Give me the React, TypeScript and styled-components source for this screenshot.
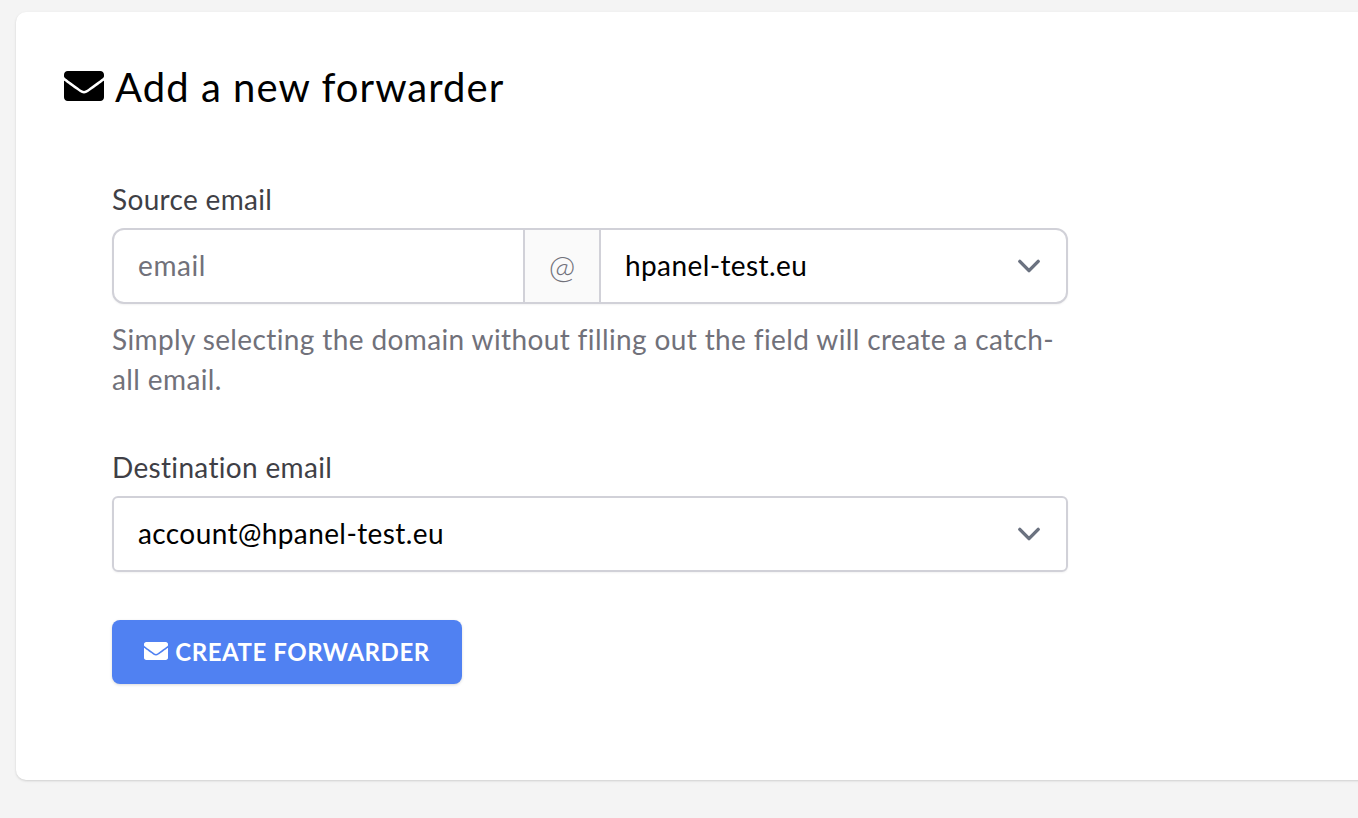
import React from "react";
import styled, { createGlobalStyle } from "styled-components";
import { FaEnvelope } from "react-icons/fa";

const Global = createGlobalStyle`
  html, body { margin: 0; padding: 0; height: 100%; overflow: hidden; background: #f4f4f4; }
  body { font-family: "Lato", "Noto Sans", sans-serif; }
`;

const Page = styled.main`
  height: 818px;
  overflow: hidden;
  padding: 12px 0 0 16px;
  box-sizing: border-box;
`;

const Card = styled.section`
  box-sizing: border-box;
  width: 1400px;
  height: 768px;
  padding: 47px 48px;
  background: #fff;
  border-radius: 10px;
  box-shadow: 0 1px 3px rgba(0, 0, 0, 0.1), 0 1px 2px rgba(0, 0, 0, 0.06);
`;

const Title = styled.h1`
  display: flex;
  align-items: center;
  gap: 11px;
  margin: 0 0 64px;
  height: 56px;
  font-size: 40px;
  line-height: 56px;
  font-weight: 400;
  letter-spacing: 1.05px;
  color: #000;
  svg { width: 40px; height: 40px; flex: none; margin-top: -2px; }
`;

const Form = styled.form`
  width: 956px;
  margin-left: 48px;
`;

const Field = styled.div<{ $gap: number }>`
  margin-bottom: ${(p) => p.$gap}px;
`;

const Label = styled.label`
  display: block;
  font-size: 28px;
  line-height: 40px;
  letter-spacing: 0.33px;
  color: #3f3f46;
  margin-bottom: 9px;
`;

const Group = styled.div`
  display: flex;
  height: 76px;
  box-sizing: border-box;
  border: 2px solid #d1d1d8;
  border-radius: 12px;
  background: #fff;
  overflow: hidden;
  box-shadow: 0 1px 2px rgba(0, 0, 0, 0.05);
`;

const TextInput = styled.input`
  width: 409px;
  flex: none;
  box-sizing: border-box;
  border: 0;
  outline: 0;
  padding: 0 24px 2px;
  font: inherit;
  font-size: 28px;
  letter-spacing: 0.6px;
  color: #000;
  background: transparent;
  &::placeholder { color: #71717a; opacity: 1; }
`;

const Addon = styled.span`
  width: 78px;
  flex: none;
  box-sizing: border-box;
  padding-bottom: 2px;
  display: flex;
  align-items: center;
  justify-content: center;
  border-left: 2px solid #d1d1d8;
  border-right: 2px solid #d1d1d8;
  background: #fafafa;
  color: #71717a;
  font-size: 32px;
  font-weight: 300;
`;

const chevron = `url("data:image/svg+xml,%3csvg xmlns='http://www.w3.org/2000/svg' fill='none' viewBox='0 0 20 20'%3e%3cpath stroke='%236b7280' stroke-linecap='round' stroke-linejoin='round' stroke-width='1.5' d='M6 8l4 4 4-4'/%3e%3c/svg%3e")`;

const Select = styled.select`
  appearance: none;
  flex: 1;
  min-width: 0;
  border: 0;
  outline: 0;
  padding: 0 60px 2px 24px;
  font: inherit;
  font-size: 28px;
  letter-spacing: 0.4px;
  color: #000;
  background: transparent ${chevron} no-repeat right 14px center / 46px 46px;
`;

const SoloSelect = styled(Select)`
  display: block;
  width: 100%;
  box-sizing: border-box;
  height: 76px;
  border: 2px solid #d1d1d8;
  border-radius: 6px;
  box-shadow: 0 1px 2px rgba(0, 0, 0, 0.05);
`;

const Hint = styled.p`
  margin: 15px 0 0;
  font-size: 28px;
  line-height: 40px;
  letter-spacing: 0.38px;
  color: #71717a;
`;

const Button = styled.button`
  display: inline-flex;
  align-items: center;
  gap: 7px;
  width: 350px;
  height: 64px;
  padding: 0 0 2px;
  justify-content: center;
  border: 0;
  border-radius: 8px;
  background: #5081f2;
  color: #fff;
  font: inherit;
  font-size: 24px;
  font-weight: 700;
  letter-spacing: 0.55px;
  box-shadow: 0 1px 3px rgba(0, 0, 0, 0.15);
  svg { width: 24px; height: 24px; flex: none; }
`;

export default function App() {
  return (
    <>
      <Global />
      <Page>
        <Card>
          <Title><FaEnvelope />Add a new forwarder</Title>
          <Form onSubmit={(e) => e.preventDefault()}>
            <Field $gap={48}>
              <Label htmlFor="src">Source email</Label>
              <Group>
                <TextInput id="src" placeholder="email" />
                <Addon>@</Addon>
                <Select aria-label="Domain" defaultValue="hpanel-test.eu">
                  <option>hpanel-test.eu</option>
                </Select>
              </Group>
              <Hint>Simply selecting the domain without filling out the field will create a catch-all email.</Hint>
            </Field>
            <Field $gap={48}>
              <Label htmlFor="dst">Destination email</Label>
              <SoloSelect id="dst" defaultValue="account@hpanel-test.eu">
                <option>account@hpanel-test.eu</option>
              </SoloSelect>
            </Field>
            <Button type="submit"><FaEnvelope />CREATE FORWARDER</Button>
          </Form>
        </Card>
      </Page>
    </>
  );
}
